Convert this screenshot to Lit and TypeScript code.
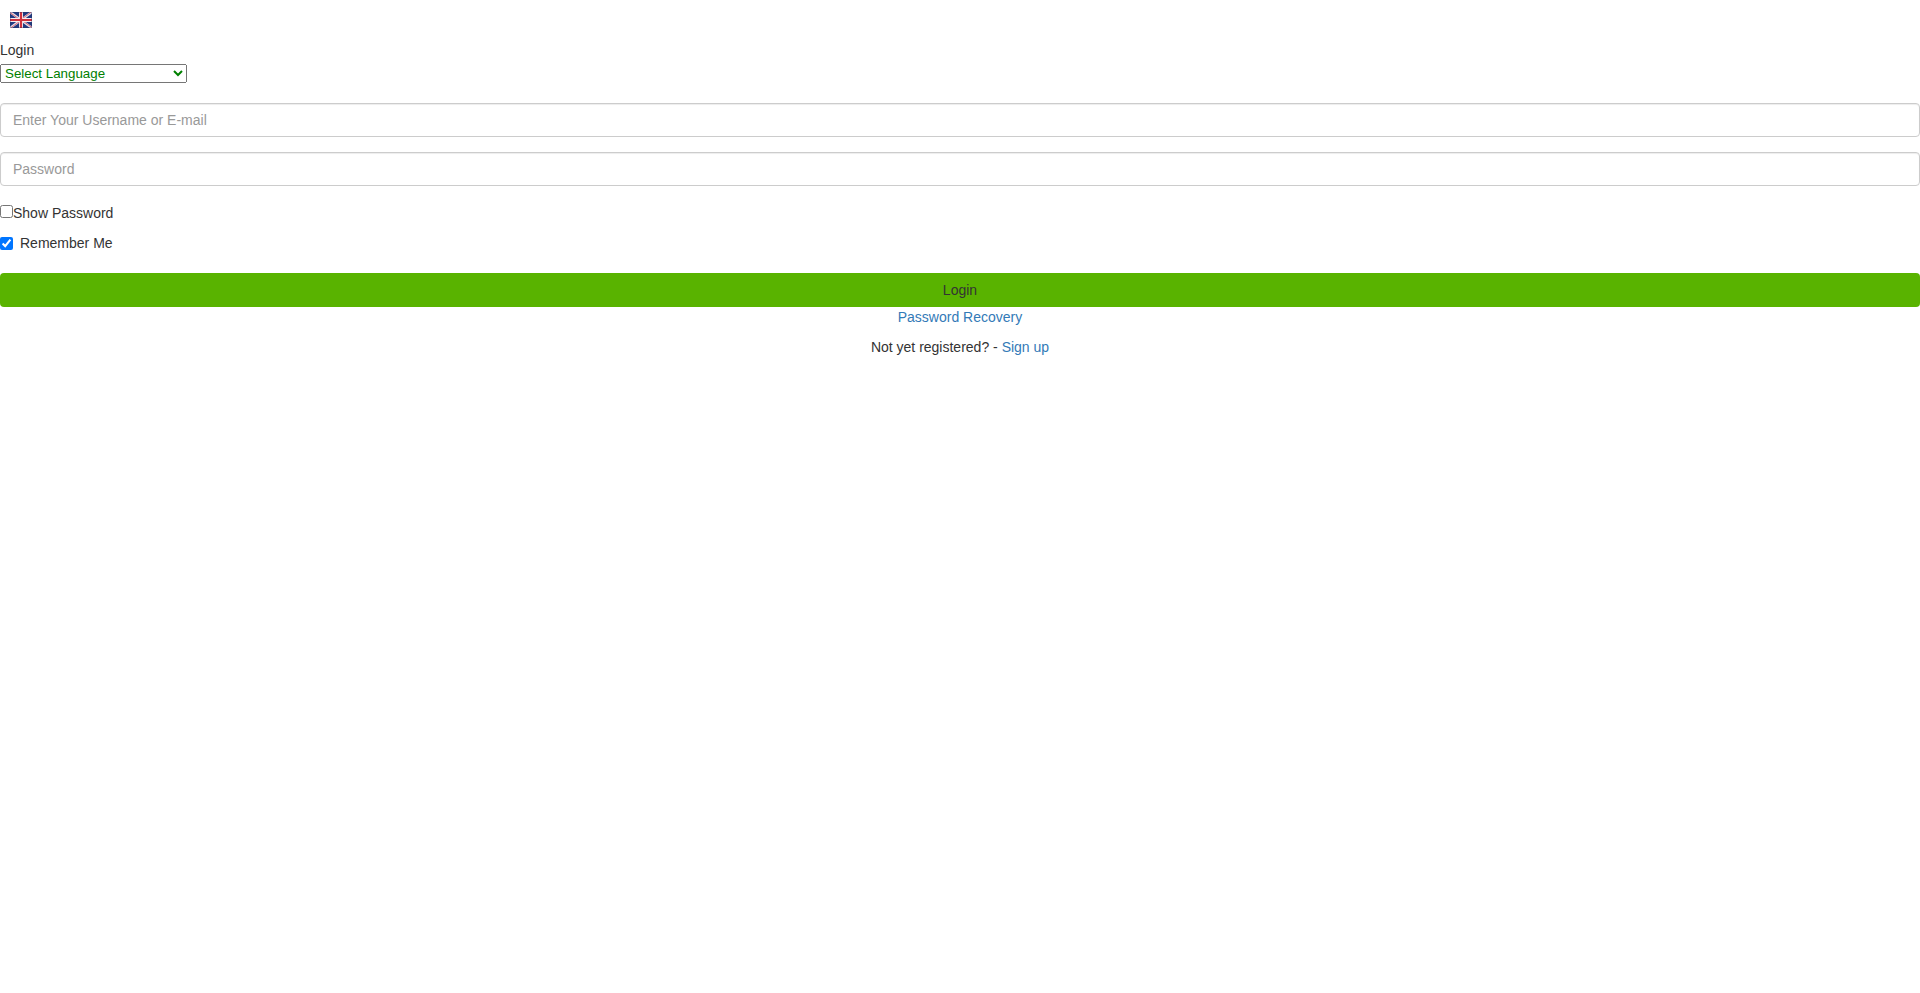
import { LitElement, html, css } from "lit";
import { customElement, state } from "lit/decorators.js";

@customElement("app-root")
export class AppRoot extends LitElement {
  static styles = css`
    :host {
      display: block;
      color: #333;
      background: #fff;
      font: 14px/20px "Helvetica Neue", Helvetica, "Liberation Sans", Arial, sans-serif;
    }
    *, *::before, *::after { box-sizing: border-box; }
    input, button, select { font-family: inherit; }
    a { color: #337ab7; text-decoration: none; }
    a:hover { color: #23527c; text-decoration: underline; }
    .locale { display: block; width: fit-content; padding: 12px 10px; }
    .flag { display: block; width: 22px; height: 16px; }
    .title { margin: 0; font-size: inherit; font-weight: 400; }
    .language {
      display: block;
      width: 187px;
      height: 19px;
      margin: 4px 0 20px;
      color: green;
    }
    .field {
      display: block;
      width: 100%;
      height: 34px;
      margin: 0 0 15px;
      padding: 6px 12px;
      font-size: 14px;
      line-height: 20px;
      color: #555;
      background: #fff;
      border: 1px solid #ccc;
      border-radius: 4px;
      box-shadow: inset 0 1px 1px rgba(0, 0, 0, 0.075);
    }
    .field::placeholder { color: #999; opacity: 1; }
    .option { display: flex; width: fit-content; margin: 0 0 10px; }
    .option input { width: 13px; height: 13px; margin: 4px 0 0; }
    .show { padding-top: 2px; }
    .show input { margin-top: 2px; }
    .remember { gap: 7px; margin-bottom: 20px; }
    .submit {
      display: block;
      width: 100%;
      padding: 6px 12px;
      font-size: 14px;
      line-height: 20px;
      color: #333;
      background: #59b300;
      border: 1px solid transparent;
      border-radius: 4px;
      cursor: pointer;
    }
    .links { text-align: center; }
    .links p { margin: 0 0 10px; }
  `;

  @state() private showPassword = false;

  private toggle(e: Event) {
    this.showPassword = (e.target as HTMLInputElement).checked;
  }

  render() {
    return html`
      <a class="locale" href="#" aria-label="English">
        <svg class="flag" viewBox="0 0 22 16" aria-hidden="true">
          <rect width="22" height="16" fill="#1f3a80" />
          <path d="M0 0L22 16M22 0L0 16" stroke="#e3dce8" stroke-width="2.4" />
          <path d="M0 .6L9 7M22 15.4L13 9M21.4 0L12 6.8M.6 16L10 9.2" stroke="#cf4a58" stroke-width=".8" />
          <path d="M11 0V16M0 8H22" stroke="#f6eef0" stroke-width="4" />
          <path d="M11 0V16M0 8H22" stroke="#d0313c" stroke-width="2.2" />
          <rect x=".5" y=".5" width="21" height="15" fill="none" stroke="#2b3560" stroke-opacity=".35" />
        </svg>
      </a>
      <main>
        <h1 class="title">Login</h1>
        <select class="language" aria-label="Select Language">
          <option>Select Language</option>
        </select>
        <form @submit=${(e: Event) => e.preventDefault()}>
          <input class="field" type="text" name="username" autocomplete="username"
            aria-label="Enter Your Username or E-mail" placeholder="Enter Your Username or E-mail" />
          <input class="field" type=${this.showPassword ? "text" : "password"} name="password"
            autocomplete="current-password" aria-label="Password" placeholder="Password" />
          <label class="option show"><input type="checkbox" @change=${this.toggle} />Show Password</label>
          <label class="option remember"><input type="checkbox" name="remember" checked />Remember Me</label>
          <button class="submit" type="submit">Login</button>
        </form>
        <div class="links">
          <p><a href="#recovery">Password Recovery</a></p>
          <p>Not yet registered? - <a href="#signup">Sign up</a></p>
        </div>
      </main>
    `;
  }
}
